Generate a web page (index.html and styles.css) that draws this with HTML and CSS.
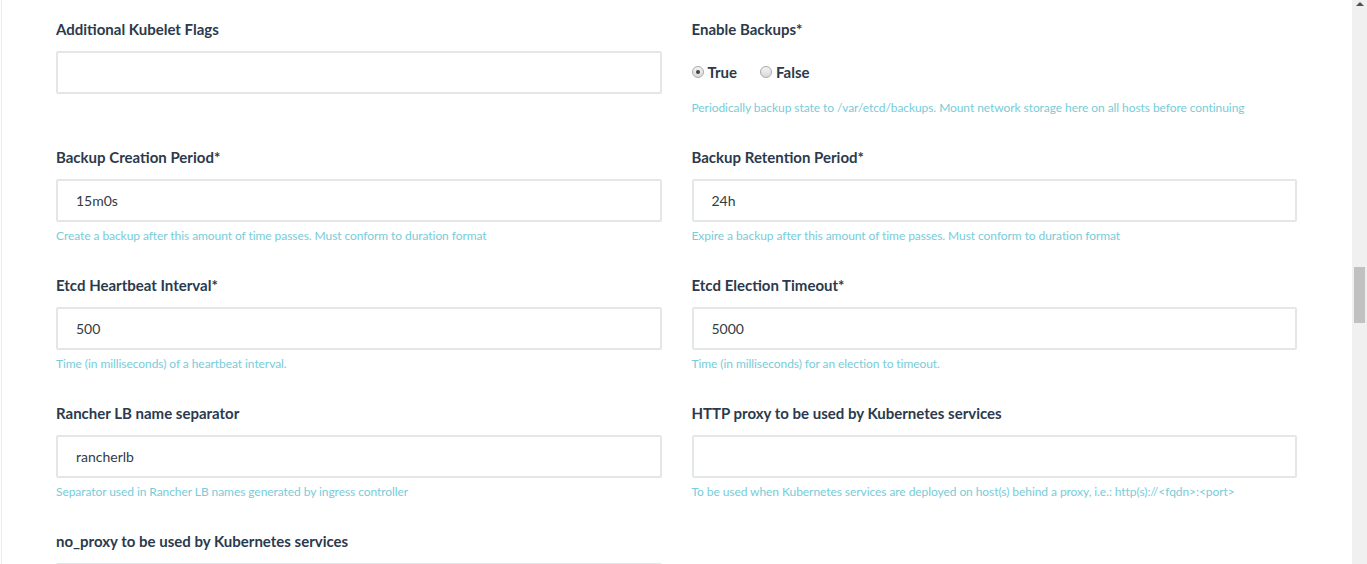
FILE: index.html
```html
<!DOCTYPE html>
<html>
<head>
<meta charset="utf-8">
<link rel="stylesheet" href="styles.css">
</head>
<body>
<div class="page">
  <main class="content">
    <div class="grid">
      <div class="field">
        <label class="label">Additional Kubelet Flags</label>
        <div class="input"></div>
      </div>
      <div class="field">
        <label class="label">Enable Backups*</label>
        <div class="radios">
          <span class="radio"><span class="dot checked"></span>True</span>
          <span class="radio"><span class="dot"></span>False</span>
        </div>
        <p class="help">Periodically backup state to /var/etcd/backups. Mount network storage here on all hosts before continuing</p>
      </div>

      <div class="field">
        <label class="label">Backup Creation Period*</label>
        <div class="input">15m0s</div>
        <p class="help">Create a backup after this amount of time passes. Must conform to duration format</p>
      </div>
      <div class="field">
        <label class="label">Backup Retention Period*</label>
        <div class="input">24h</div>
        <p class="help">Expire a backup after this amount of time passes. Must conform to duration format</p>
      </div>

      <div class="field">
        <label class="label">Etcd Heartbeat Interval*</label>
        <div class="input">500</div>
        <p class="help">Time (in milliseconds) of a heartbeat interval.</p>
      </div>
      <div class="field">
        <label class="label">Etcd Election Timeout*</label>
        <div class="input">5000</div>
        <p class="help">Time (in milliseconds) for an election to timeout.</p>
      </div>

      <div class="field">
        <label class="label">Rancher LB name separator</label>
        <div class="input">rancherlb</div>
        <p class="help">Separator used in Rancher LB names generated by ingress controller</p>
      </div>
      <div class="field">
        <label class="label">HTTP proxy to be used by Kubernetes services</label>
        <div class="input"></div>
        <p class="help">To be used when Kubernetes services are deployed on host(s) behind a proxy, i.e.: http(s)://&lt;fqdn&gt;:&lt;port&gt;</p>
      </div>

      <div class="field">
        <label class="label">no_proxy to be used by Kubernetes services</label>
        <div class="input"></div>
      </div>
    </div>
  </main>
  <div class="scrollbar">
    <div class="arrow"></div>
    <div class="thumb"></div>
  </div>
</div>
</body>
</html>
```

FILE: styles.css
```css
html, body {
  margin: 0;
  padding: 0;
  height: 564px;
  overflow: hidden;
  background: #fff;
}
.page {
  display: flex;
  height: 564px;
  font-family: Lato, "Open Sans", sans-serif;
}
.content {
  flex: 1;
  margin-left: 1px;
  border-left: 1px solid #ebebeb;
  padding: 19px 55px 0 54px;
  overflow: hidden;
}
.grid {
  display: grid;
  grid-template-columns: 1fr 1fr;
  column-gap: 30px;
}
.field {
  display: flex;
  flex-direction: column;
  margin-bottom: 31px;
  height: 97px;
}
.label {
  flex: none;
  font-size: 15px;
  font-weight: 700;
  line-height: 20px;
  color: #2b3a4c;
  margin-bottom: 12px;
}
.input {
  flex: none;
  box-sizing: border-box;
  height: 43px;
  border: 2px solid #e3e7e7;
  border-radius: 2px;
  padding: 0 18px;
  font-size: 14px;
  line-height: 39px;
  color: #333b44;
}
.help {
  flex: none;
  margin: 6px 0 0;
  font-size: 12px;
  line-height: 16px;
  letter-spacing: -0.07px;
  color: #78ccd9;
}
.radios {
  flex: none;
  height: 43px;
  display: flex;
  align-items: center;
  gap: 23px;
  padding-bottom: 1px;
  box-sizing: border-box;
}
.radio {
  display: inline-flex;
  align-items: center;
  gap: 4px;
  font-size: 15px;
  font-weight: 700;
  color: #2b3a4c;
}
.dot {
  box-sizing: border-box;
  width: 12px;
  height: 12px;
  border-radius: 50%;
  border: 1px solid #a9a9a9;
  background: linear-gradient(#f4f4f4, #d9d9d9);
  display: inline-flex;
  align-items: center;
  justify-content: center;
}
.dot.checked::after {
  content: "";
  width: 4px;
  height: 4px;
  border-radius: 50%;
  background: #444;
}
.scrollbar {
  width: 15px;
  height: 564px;
  background: #f0f0f0;
  display: flex;
  flex-direction: column;
  align-items: center;
}
.arrow {
  margin-top: 2px;
  width: 0;
  height: 0;
  border-left: 4px solid transparent;
  border-right: 4px solid transparent;
  border-bottom: 4px solid #505050;
}
.thumb {
  margin-top: 261px;
  width: 11px;
  height: 56px;
  background: #c1c1c1;
}
```
